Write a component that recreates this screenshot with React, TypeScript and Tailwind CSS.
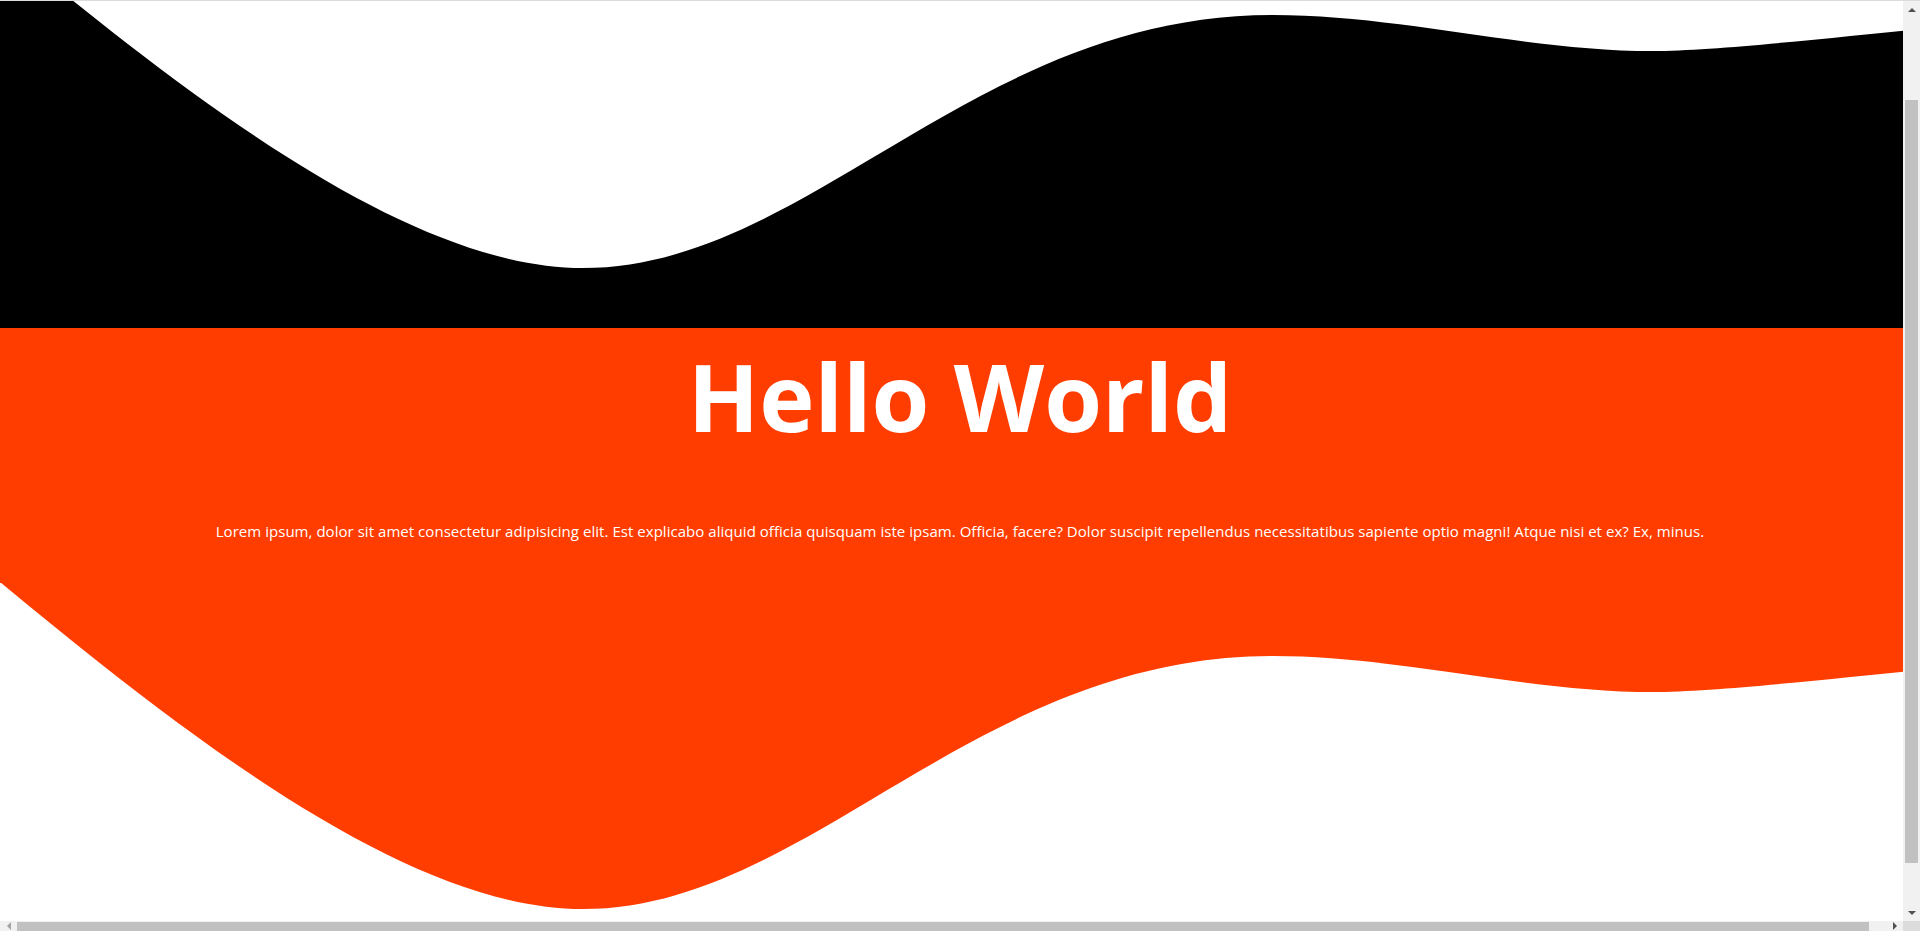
import { useLayoutEffect } from 'react';

// wave outline as cubic segments, in page pixels; dy moves it down inside its box
function wavePath(dy: number, bottom: number) {
  const y = (v: number) => v + dy;
  return [
    `M0,${y(-59)}`,
    `C200,${y(107)} 413,${y(268)} 583,${y(268)}`,
    `C808,${y(268)} 973,${y(15)} 1273,${y(15)}`,
    `C1400,${y(15)} 1526,${y(51)} 1653,${y(51)}`,
    `C1713,${y(51)} 1831,${y(37.9)} 1920,${y(29)}`,
    `L1920,${bottom} L0,${bottom} Z`,
  ].join(' ');
}

function Wave({ height, dy, fill, bg }: { height: number; dy: number; fill: string; bg: string }) {
  return (
    <svg
      className="block w-full h-full"
      viewBox={`0 0 1920 ${height}`}
      preserveAspectRatio="none"
      style={{ background: bg }}
    >
      <path d={wavePath(dy, height)} fill={fill} />
    </svg>
  );
}

function Scrollbars() {
  return (
    <>
      <div className="fixed top-0 left-0 w-full h-px bg-[#dadce0]" />
      {/* vertical */}
      <div className="fixed top-px right-0 w-[17px] h-[920px] bg-[#f1f1f1] flex flex-col items-center">
        <div className="h-[17px] flex items-center justify-center">
          <div className="w-0 h-0 border-x-[4px] border-x-transparent border-b-[4px] border-b-[#505050]" />
        </div>
        <div className="mt-[82px] w-[13px] h-[763px] bg-[#c1c1c1]" />
        <div className="mt-auto h-[17px] flex items-center justify-center">
          <div className="w-0 h-0 border-x-[4px] border-x-transparent border-t-[4px] border-t-[#505050]" />
        </div>
      </div>
      {/* horizontal */}
      <div className="fixed bottom-0 left-0 w-[1903px] h-[10px] bg-[#f1f1f1] flex items-end">
        <div className="w-[17px] h-[10px] flex items-end justify-center pb-px">
          <div className="w-0 h-0 border-y-[4px] border-y-transparent border-r-[4px] border-r-[#a3a3a3]" />
        </div>
        <div className="w-[1852px] h-[9px] bg-[#c1c1c1]" />
        <div className="ml-auto w-[17px] h-[10px] flex items-end justify-center pb-px">
          <div className="w-0 h-0 border-y-[4px] border-y-transparent border-l-[4px] border-l-[#505050]" />
        </div>
      </div>
      <div className="fixed bottom-0 right-0 w-[17px] h-[10px] bg-[#dcdcdc]" />
    </>
  );
}

export default function App() {
  useLayoutEffect(() => {
    window.scrollTo(0, 100);
  }, []);

  return (
    <div className="w-screen font-['Open_Sans',sans-serif]">
      <div className="w-screen h-[428px]">
        <Wave height={428} dy={100} fill="#000000" bg="#ffffff" />
      </div>

      <section className="w-screen h-[255px] bg-[#ff3d00] pt-[21px] text-white">
        <h1 className="text-center text-[93.5px] font-bold leading-none">Hello World</h1>
        <p className="mt-[76px] text-center text-[15px] leading-6 tracking-[0.04px]">
          Lorem ipsum, dolor sit amet consectetur adipisicing elit. Est explicabo aliquid officia quisquam iste ipsam. Officia, facere? Dolor suscipit repellendus necessitatibus sapiente optio magni! Atque nisi et ex? Ex, minus.
        </p>
      </section>

      <div className="w-screen h-[388px]">
        <Wave height={388} dy={58} fill="#ffffff" bg="#ff3d00" />
      </div>

      <Scrollbars />
    </div>
  );
}
